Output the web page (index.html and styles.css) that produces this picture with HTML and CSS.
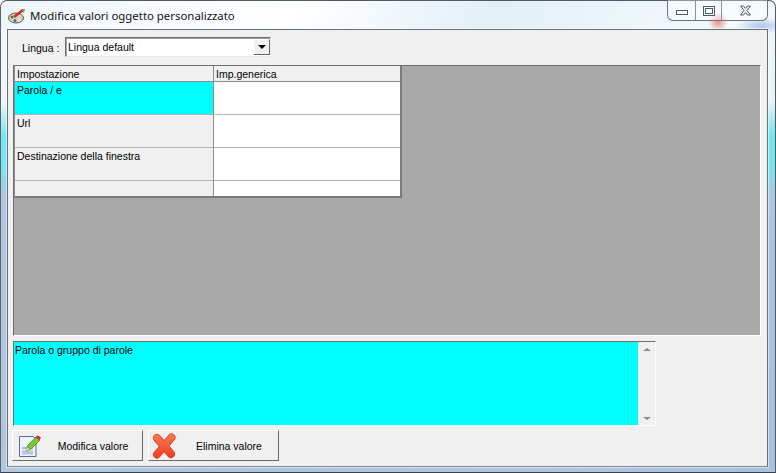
FILE: index.html
```html
<!DOCTYPE html>
<html lang="en">
<head>
    <meta charset="UTF-8">
    <title>Modifica valori oggetto personalizzato</title>
    <link rel="stylesheet" href="styles.css">
</head>
<body>
    <div class="window">
        <div class="titlebar">
            <svg class="app-icon" width="18" height="16" viewBox="0 0 18 16">
                <ellipse cx="8" cy="10" rx="7.5" ry="5" fill="#d8d4c0" stroke="#55604a"/>
                <circle cx="4" cy="9" r="1.5" fill="#3c7a3a"/>
                <circle cx="7" cy="12.5" r="1.5" fill="#2f6fb0"/>
                <circle cx="11" cy="12" r="1.5" fill="#e8e8e8"/>
                <path d="M6 9 L15 2" stroke="#d8281e" stroke-width="2.6"/>
                <path d="M13 1 L17 1 L16 5" fill="#8f9a50"/>
            </svg>
            <span class="title">Modifica valori oggetto personalizzato</span>
            <div class="win-buttons">
                <div class="win-btn btn-min"><span class="min-glyph"></span></div>
                <div class="win-btn btn-max"><span class="max-glyph"></span></div>
                <div class="win-btn btn-close">
                    <svg width="13" height="11" viewBox="0 0 13 11">
                        <path d="M1.5 1 L4.5 1 L6.5 3.4 L8.5 1 L11.5 1 L8 5.5 L11.5 10 L8.5 10 L6.5 7.6 L4.5 10 L1.5 10 L5 5.5 Z" fill="#eef1f4" stroke="#4f5a66"/>
                    </svg>
                </div>
            </div>
        </div>
        <div class="client">
            <div class="lang-row">
                <label class="lang-label">Lingua :</label>
                <div class="combo">
                    <span class="combo-text">Lingua default</span>
                    <div class="combo-btn"><span class="arrow-down"></span></div>
                </div>
            </div>
            <div class="grid-area">
                <div class="grid">
                    <div class="cell head">Impostazione</div>
                    <div class="cell head last">Imp.generica</div>
                    <div class="cell row-h selected">Parola / e</div>
                    <div class="cell row-h value last"></div>
                    <div class="cell row-h">Url</div>
                    <div class="cell row-h value last"></div>
                    <div class="cell row-h">Destinazione della finestra</div>
                    <div class="cell row-h value last"></div>
                    <div class="cell row-s bottom"></div>
                    <div class="cell row-s value last bottom"></div>
                </div>
            </div>
            <div class="memo-row">
                <div class="memo">Parola o gruppo di parole</div>
                <div class="scrollbar">
                    <span class="sb-up"></span>
                    <span class="sb-down"></span>
                </div>
            </div>
            <div class="actions">
                <button class="action-btn">
                    <svg class="btn-icon" width="24" height="24" viewBox="0 0 24 24">
                        <path d="M1.5 2.5 H15 L18 5 V22.5 H1.5 Z" fill="#eef2fa" stroke="#5a6c9c"/>
                        <rect x="4" y="13" width="11" height="2" fill="#a9b8d4"/>
                        <rect x="4" y="16.5" width="11" height="4" fill="#b9c6de"/>
                        <path d="M8 17 L10 11 L18 3 L22 6 L13 15 Z" fill="#79c936" stroke="#3f8a20" stroke-width="0.8"/>
                        <path d="M8 17 L9 13.6 L11.2 15.6 Z" fill="#f4dfb4"/>
                        <path d="M17.5 3.5 L19.5 1.2 L23 3.6 L21.6 6 Z" fill="#d5262c"/>
                    </svg>
                    <span class="btn-label">Modifica valore</span>
                </button>
                <button class="action-btn">
                    <svg class="btn-icon icon-x" width="24" height="26" viewBox="0 0 24 26">
                        <defs>
                            <linearGradient id="redX" gradientUnits="userSpaceOnUse" x1="0" y1="0" x2="0" y2="26">
                                <stop offset="0" stop-color="#ff7d55"/>
                                <stop offset="1" stop-color="#ec3a20"/>
                            </linearGradient>
                        </defs>
                        <path d="M5 5 L19 21 M19.5 4.5 L5 21.5" fill="none" stroke="#d23a20" stroke-width="8" stroke-linecap="round"/>
                        <path d="M5 5 L19 21 M19.5 4.5 L5 21.5" fill="none" stroke="url(#redX)" stroke-width="6.5" stroke-linecap="round"/>
                    </svg>
                    <span class="btn-label">Elimina valore</span>
                </button>
            </div>
        </div>
    </div>
</body>
</html>
```

FILE: styles.css
```css
html, body {
    margin: 0;
    padding: 0;
}
body {
    width: 776px;
    height: 473px;
    overflow: hidden;
    font-family: "Liberation Sans", Arial, sans-serif;
    font-size: 10.5px;
    color: #000;
}
.window {
    width: 776px;
    height: 473px;
    box-sizing: border-box;
    display: flex;
    flex-direction: column;
    border-radius: 7px 7px 0 0;
    border: 1px solid #4e5a66;
    border-bottom-color: #39424c;
    border-left-color: #58646e;
    padding: 0 7px 5px 6px;
    background:
        radial-gradient(circle 10px at 717px 21px, rgba(235, 110, 100, 0.75), rgba(235, 110, 100, 0) 100%),
        radial-gradient(ellipse 26px 8px at 760px 25px, rgba(130, 165, 225, 0.6), rgba(130, 165, 225, 0) 100%),
        linear-gradient(180deg, rgba(255, 255, 255, 0) 0, rgba(255, 255, 255, 0) 100px, rgba(90, 225, 235, 0.8) 135px, rgba(90, 225, 235, 0.8) 165px, rgba(150, 180, 215, 0.7) 195px, rgba(160, 185, 215, 0.8) 440px),
        linear-gradient(115deg, #eef6fb 0, #ffffff 30%, #e2eff7 50%, #f4fafd 75%, #cfdff0 100%);
}
.titlebar {
    height: 28px;
    flex: none;
    display: flex;
    align-items: center;
}
.app-icon {
    flex: none;
    margin: 2px 0 0 1px;
}
.title {
    margin: 0 0 0 4px;
    font-family: "Noto Sans", sans-serif;
    font-size: 11.4px;
    color: #111;
}
.win-buttons {
    margin-left: auto;
    align-self: flex-start;
    margin-top: -1px;
    display: flex;
    height: 20px;
    border: 1px solid #6a7480;
    border-top: none;
    border-radius: 0 0 6px 6px;
    background: rgba(255, 255, 255, 0.35);
}
.win-btn {
    display: flex;
    align-items: center;
    justify-content: center;
    box-sizing: border-box;
}
.btn-min {
    width: 28px;
    border-right: 1px solid #8a939c;
}
.btn-max {
    width: 26px;
    border-right: 1px solid #8a939c;
}
.btn-close {
    width: 45px;
    padding-left: 2px;
}
.min-glyph {
    width: 10px;
    height: 3px;
    margin-top: 5px;
    border: 1px solid #4f5a66;
    background: #fff;
}
.max-glyph {
    width: 6px;
    height: 4px;
    margin-top: 1px;
    border: 1px solid #4f5a66;
    outline: 1px solid #4f5a66;
    outline-offset: 1px;
    background: #fff;
}
.client {
    flex: 1;
    min-height: 0;
    background: #f0f0f0;
    border: 1px solid #66707a;
    border-bottom-color: #7c8894;
    padding: 7px 6px 0 5px;
    display: flex;
    flex-direction: column;
    box-shadow: 0 0 0 1px rgba(255, 255, 255, 0.5);
}
.lang-row {
    display: flex;
    align-items: center;
    height: 20px;
    padding-left: 9px;
}
.lang-label {
    width: 43px;
    padding-top: 1px;
}
.combo {
    width: 206px;
    height: 20px;
    box-sizing: border-box;
    background: #fff;
    border: 1px solid;
    border-color: #6d6d6d #e8e8e8 #e8e8e8 #6d6d6d;
    box-shadow: inset 1px 1px 0 #a0a0a0;
    display: flex;
    align-items: center;
    justify-content: space-between;
}
.combo-text {
    padding-left: 2px;
}
.combo-btn {
    width: 17px;
    height: 16px;
    box-sizing: border-box;
    background: #f0f0f0;
    border: 1px solid;
    border-color: #fff #696969 #696969 #fff;
    display: flex;
    align-items: center;
    justify-content: center;
}
.arrow-down {
    width: 0;
    height: 0;
    border-left: 4px solid transparent;
    border-right: 4px solid transparent;
    border-top: 4px solid #000;
}
.grid-area {
    margin-top: 8px;
    height: 271px;
    flex: none;
    box-sizing: border-box;
    background: #a9a9a9;
    border-top: 1px solid #6f6f6f;
    border-left: 1px solid #6f6f6f;
    border-right: 1px solid #fff;
    border-bottom: 1px solid #fff;
}
.grid {
    width: 385px;
    display: grid;
    grid-template-columns: 199px 186px;
    background: #fff;
    border-left: 1px solid #8c8c8c;
    border-right: 2px solid #7a7a7a;
    border-bottom: 2px solid #7a7a7a;
}
.cell {
    box-sizing: border-box;
    padding: 2px 0 0 2px;
    background: #f0f0f0;
    border-right: 1px solid #8c8c8c;
    border-bottom: 1px solid #b4b4b4;
    line-height: 13px;
    overflow: hidden;
}
.cell.last {
    border-right: none;
}
.cell.head {
    height: 16px;
    padding-top: 2px;
    border-bottom-color: #8c8c8c;
}
.row-h {
    height: 33px;
}
.bottom {
    border-bottom: none;
    height: 15px;
}
.cell.value {
    background: #fff;
}
.cell.selected {
    background: #00ffff;
}
.memo-row {
    display: flex;
    margin-top: 5px;
    width: 643px;
    height: 85px;
    flex: none;
    box-sizing: border-box;
    border-top: 1px solid #6f6f6f;
    border-left: 1px solid #6f6f6f;
    border-right: 1px solid #fff;
    border-bottom: 1px solid #fff;
}
.memo {
    flex: 1;
    background: #00ffff;
    padding: 2px 0 0 1px;
    line-height: 13px;
}
.scrollbar {
    width: 17px;
    flex: none;
    background: #f0f0f0;
    display: flex;
    flex-direction: column;
    justify-content: space-between;
    align-items: center;
    padding: 6px 0 5px;
}
.sb-up, .sb-down {
    width: 0;
    height: 0;
    border-left: 4px solid transparent;
    border-right: 4px solid transparent;
}
.sb-up {
    border-bottom: 3px solid #8a8a8a;
}
.sb-down {
    border-top: 3px solid #8a8a8a;
}
.actions {
    display: flex;
    gap: 5px;
    margin-top: 4px;
    margin-left: -1px;
}
.action-btn {
    width: 131px;
    height: 31px;
    padding: 0;
    box-sizing: border-box;
    background: #f0f0f0;
    border: 1px solid;
    border-color: #fff #696969 #696969 #fff;
    font-family: "Liberation Sans", Arial, sans-serif;
    font-size: 10.5px;
    color: #000;
    display: flex;
    align-items: center;
}
.btn-icon {
    flex: none;
    margin-left: 5px;
}
.icon-x {
    margin-left: 3px;
    margin-right: 2px;
}
.btn-label {
    flex: 1;
    text-align: center;
    padding-left: 2px;
    padding-top: 1px;
}
```
